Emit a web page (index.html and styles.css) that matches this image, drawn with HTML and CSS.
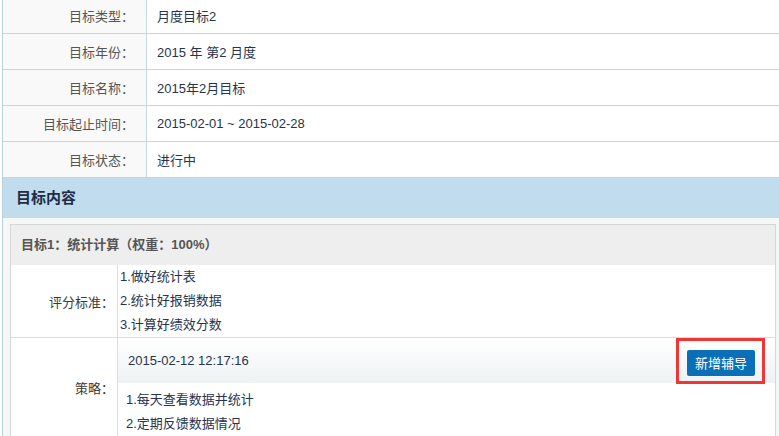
FILE: index.html
```
<!doctype html>
<html>
    <head>
        <title>目标详情</title>
        <meta charset="utf-8">
        <link rel="stylesheet" href="styles.css">
    </head>
    <body>
        <div class="page">
            <table class="info">
                <tr><th>目标类型：</th><td>月度目标2</td></tr>
                <tr><th>目标年份：</th><td>2015 年 第2 月度</td></tr>
                <tr><th>目标名称：</th><td>2015年2月目标</td></tr>
                <tr><th>目标起止时间：</th><td>2015-02-01 ~ 2015-02-28</td></tr>
                <tr><th>目标状态：</th><td>进行中</td></tr>
            </table>

            <div class="section-title">目标内容</div>

            <div class="section-body">
                <div class="goal">
                    <div class="goal-head">目标1：统计计算（权重：100%）</div>

                    <div class="goal-row">
                        <div class="goal-label">评分标准：</div>
                        <div class="goal-value">
                            <div class="item">1.做好统计表</div>
                            <div class="item">2.统计好报销数据</div>
                            <div class="item">3.计算好绩效分数</div>
                        </div>
                    </div>

                    <div class="goal-row">
                        <div class="goal-label">策略：</div>
                        <div class="goal-value">
                            <div class="strategy-head">
                                <span class="date">2015-02-12 12:17:16</span>
                                <span class="mark"><button class="btn">新增辅导</button></span>
                            </div>
                            <div class="strategy-list">
                                <div class="item">1.每天查看数据并统计</div>
                                <div class="item">2.定期反馈数据情况</div>
                            </div>
                        </div>
                    </div>
                </div>
            </div>
        </div>
    </body>
</html>
```

FILE: styles.css
```
body{
    margin: 0;
    background: #fff;
    font-family: "Liberation Sans", "Noto Sans CJK SC", sans-serif;
    font-size: 13px;
    color: #26344f;
}
.page{
    margin-left: 2px;
    border-left: 1px solid #b7d2df;
    background: #f5f7f7;
    min-height: 440px;
}

/* top info table */
.info{
    width: 100%;
    margin-top: -2px;
    border-collapse: collapse;
    background: #fff;
}
.info th,
.info td{
    height: 35px;
    padding: 0;
    border-bottom: 1px solid #c6d5db;
}
.info th{
    width: 131px;
    padding-right: 12px;
    text-align: right;
    font-weight: normal;
    color: #555;
    background: #f9f9f9;
    border-right: 1px solid #c2d7e0;
}
.info td{
    padding-left: 10px;
}

.section-title{
    height: 40px;
    line-height: 39px;
    padding-left: 13px;
    font-size: 15px;
    font-weight: bold;
    color: #1f2b48;
    background: #c1dcec;
}

.section-body{
    padding: 6px 3px 0 7px;
}
.goal{
    border: 1px solid #d6d8d8;
    border-bottom: none;
    background: #fff;
}
.goal-head{
    height: 40px;
    line-height: 40px;
    padding-left: 10px;
    font-weight: bold;
    color: #555;
    background: #eee;
}

.goal-row{
    display: flex;
    border-bottom: 1px solid #ddd;
}
.goal-label{
    width: 103px;
    flex: none;
    padding-right: 3px;
    display: flex;
    align-items: center;
    justify-content: flex-end;
    color: #3a3a3a;
    border-right: 1px solid #ddd;
}
.goal-value{
    flex: 1;
}
.item{
    height: 24px;
    line-height: 24px;
    padding-left: 2px;
}

.strategy-head{
    height: 45px;
    padding: 0 20px 0 10px;
    display: flex;
    align-items: center;
    justify-content: space-between;
    background: linear-gradient(#fff, #eef2f3);
}
.strategy-list{
    padding: 5px 0 0 6px;
}

.mark{
    position: relative;
    top: 2px;
}
.mark::after{
    content: "";
    position: absolute;
    left: -11px;
    right: -10px;
    top: -12px;
    bottom: -8px;
    border: 3px solid #f03535;
}
.btn{
    display: block;
    width: 68px;
    height: 26px;
    padding: 0;
    border: none;
    border-radius: 2px;
    font-family: inherit;
    font-size: 13px;
    color: #fff;
    background: #0b6fb7;
}
```
